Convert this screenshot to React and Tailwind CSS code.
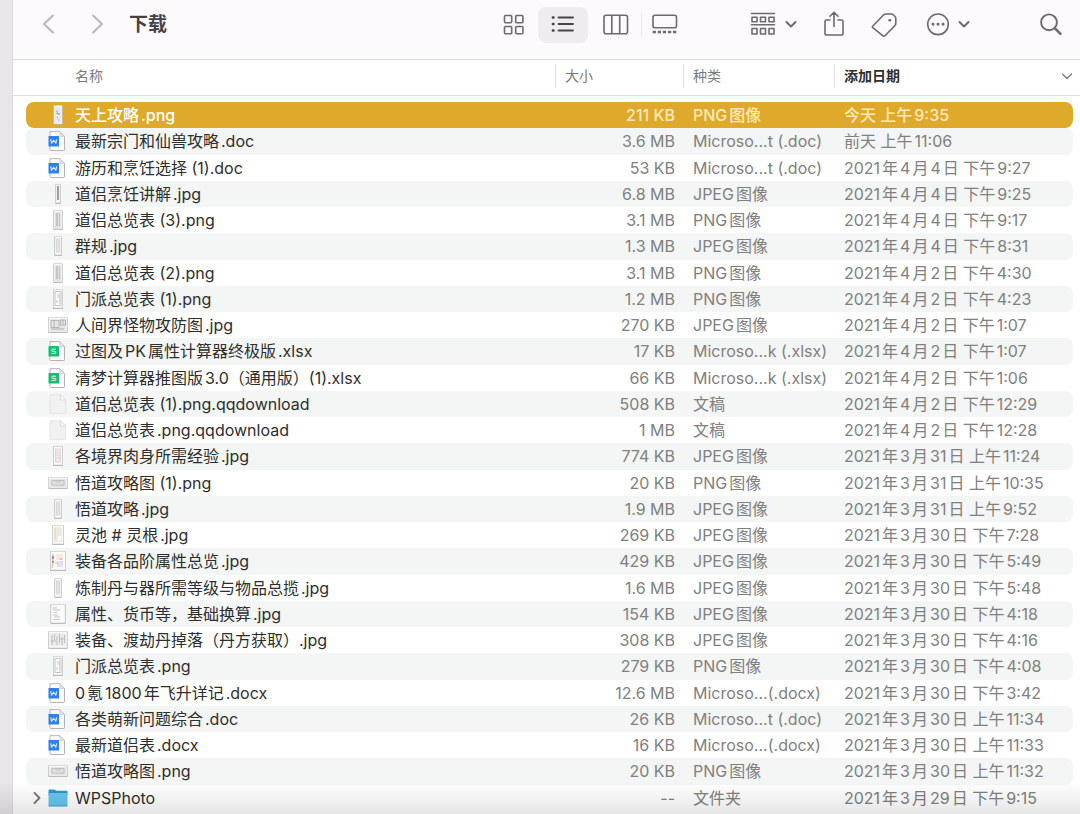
import clsx from "clsx"

const FILES = [
  { name: "天上攻略.png", size: "211 KB", kind: "PNG图像", date: "今天 上午9:35", icon: "card" },
  { name: "最新宗门和仙兽攻略.doc", size: "3.6 MB", kind: "Microso...t (.doc)", date: "前天 上午11:06", icon: "word" },
  { name: "游历和烹饪选择 (1).doc", size: "53 KB", kind: "Microso...t (.doc)", date: "2021年4月4日 下午9:27", icon: "word" },
  { name: "道侣烹饪讲解.jpg", size: "6.8 MB", kind: "JPEG图像", date: "2021年4月4日 下午9:25", icon: "sliver" },
  { name: "道侣总览表 (3).png", size: "3.1 MB", kind: "PNG图像", date: "2021年4月4日 下午9:17", icon: "tall" },
  { name: "群规.jpg", size: "1.3 MB", kind: "JPEG图像", date: "2021年4月4日 下午8:31", icon: "strip" },
  { name: "道侣总览表 (2).png", size: "3.1 MB", kind: "PNG图像", date: "2021年4月2日 下午4:30", icon: "tall" },
  { name: "门派总览表 (1).png", size: "1.2 MB", kind: "PNG图像", date: "2021年4月2日 下午4:23", icon: "frame" },
  { name: "人间界怪物攻防图.jpg", size: "270 KB", kind: "JPEG图像", date: "2021年4月2日 下午1:07", icon: "wide" },
  { name: "过图及PK属性计算器终极版.xlsx", size: "17 KB", kind: "Microso...k (.xlsx)", date: "2021年4月2日 下午1:07", icon: "sheet" },
  { name: "清梦计算器推图版3.0（通用版）(1).xlsx", size: "66 KB", kind: "Microso...k (.xlsx)", date: "2021年4月2日 下午1:06", icon: "sheet" },
  { name: "道侣总览表 (1).png.qqdownload", size: "508 KB", kind: "文稿", date: "2021年4月2日 下午12:29", icon: "blank" },
  { name: "道侣总览表.png.qqdownload", size: "1 MB", kind: "文稿", date: "2021年4月2日 下午12:28", icon: "blank" },
  { name: "各境界肉身所需经验.jpg", size: "774 KB", kind: "JPEG图像", date: "2021年3月31日 上午11:24", icon: "rosy" },
  { name: "悟道攻略图 (1).png", size: "20 KB", kind: "PNG图像", date: "2021年3月31日 上午10:35", icon: "banner" },
  { name: "悟道攻略.jpg", size: "1.9 MB", kind: "JPEG图像", date: "2021年3月31日 上午9:52", icon: "strip" },
  { name: "灵池 # 灵根.jpg", size: "269 KB", kind: "JPEG图像", date: "2021年3月30日 下午7:28", icon: "cream" },
  { name: "装备各品阶属性总览.jpg", size: "429 KB", kind: "JPEG图像", date: "2021年3月30日 下午5:49", icon: "colour" },
  { name: "炼制丹与器所需等级与物品总揽.jpg", size: "1.6 MB", kind: "JPEG图像", date: "2021年3月30日 下午5:48", icon: "strip" },
  { name: "属性、货币等，基础换算.jpg", size: "154 KB", kind: "JPEG图像", date: "2021年3月30日 下午4:18", icon: "text" },
  { name: "装备、渡劫丹掉落（丹方获取）.jpg", size: "308 KB", kind: "JPEG图像", date: "2021年3月30日 下午4:16", icon: "chart" },
  { name: "门派总览表.png", size: "279 KB", kind: "PNG图像", date: "2021年3月30日 下午4:08", icon: "frame" },
  { name: "0氪1800年飞升详记.docx", size: "12.6 MB", kind: "Microso...(.docx)", date: "2021年3月30日 下午3:42", icon: "word" },
  { name: "各类萌新问题综合.doc", size: "26 KB", kind: "Microso...t (.doc)", date: "2021年3月30日 上午11:34", icon: "word" },
  { name: "最新道侣表.docx", size: "16 KB", kind: "Microso...(.docx)", date: "2021年3月30日 上午11:33", icon: "word" },
  { name: "悟道攻略图.png", size: "20 KB", kind: "PNG图像", date: "2021年3月30日 上午11:32", icon: "banner" },
  { name: "WPSPhoto", size: "--", kind: "文件夹", date: "2021年3月29日 下午9:15", icon: "folder", folder: true },
]

// Frame size and the marks inside each image preview, on a 20x20 canvas
const PREVIEWS = {
  card: { w: 9, h: 19, marks: <><rect x="7" y="2" width="6" height="16" fill="#e6e9ef" /><path d="M9 5.500v2M11 8v2M8.500 8.500h2M9.500 12v1M10.500 14.500v1" stroke="#8f97a6" /></> },
  sliver: { w: 5, h: 19, marks: <path d="M10 2v14" stroke="#777" strokeWidth="1.4" /> },
  tall: { w: 9, h: 19, marks: <><rect x="7" y="2" width="6" height="16" fill="#dfe2e1" /><path d="M9 3v13" stroke="#a5acaa" /><path d="M11.500 4v12" stroke="#c2c8c6" /></> },
  strip: { w: 7, h: 19, marks: <><rect x="8.500" y="2" width="3" height="15" fill="#e2e3e2" /><path d="M8.500 3v13M11.500 3v13" stroke="#cfcfcf" strokeWidth="0.7" /></> },
  frame: { w: 10, h: 19, marks: <><path d="M7 2.500h6v14H7zM10 5v4M9 11v3" fill="none" stroke="#c2c5c4" /><path d="M11.500 4v11" stroke="#d5d8d7" /></> },
  rosy: { w: 10, h: 19, marks: <><rect x="7.500" y="3" width="5" height="13" fill="#f1e9ec" stroke="#d1cdcf" strokeWidth="0.7" /><path d="M8 6h4M8 9h4M8 12h4" stroke="#dcd0d4" strokeWidth="0.6" /></> },
  cream: { w: 12, h: 19, marks: <><rect x="6" y="2" width="8" height="15" fill="#edeade" /><path d="M7 3v12" stroke="#d9d5c7" /><rect x="10" y="11" width="3" height="5" fill="#fbfaf4" /></> },
  colour: { w: 16, h: 19, marks: <><path d="M4.500 3v14" stroke="#d9c9bd" strokeWidth="1.5" /><path d="M5 5v3M5 10v2" stroke="#ab7c62" strokeWidth="1.6" /><rect x="8" y="3" width="7" height="6" fill="#f4eadf" /><rect x="9" y="10" width="6" height="6" fill="#e7dcf0" /><path d="M7 12h3M11 8h4" stroke="#c9b5c9" /></> },
  text: { w: 15, h: 19, marks: <path d="M5 4h4M5 6h7M6 8.500h3M5 11h5M6 13h6M5 15.500h7" stroke="#b8bab9" strokeWidth="0.8" /> },
  wide: { w: 19, h: 15, marks: <><rect x="2" y="4" width="16" height="12" fill="#e6e6e6" /><path d="M3 5.500h8v7H3zM6 5v7M12.500 5h5v5h-5zM15 5v5M3 14h13" fill="none" stroke="#a8a8a8" strokeWidth="0.8" /></> },
  banner: { w: 19, h: 11, marks: <><rect x="2" y="6" width="16" height="8" fill="#e4e4e4" /><path d="M4 7.500h12v4.500H4zM7 9h6" fill="none" stroke="#b5b5b5" strokeWidth="0.8" /></> },
  chart: { w: 19, h: 17, marks: <><rect x="2" y="3" width="16" height="13" fill="#ececec" /><path d="M4 5v10M6.500 4v6M9 6v9M11.500 4v9M14 7v8M16.500 5v8M3 11h5M11 9h6" stroke="#b4b4b4" strokeWidth="0.8" /></> },
}

function Preview({ type }) {
  const { w, h, marks } = PREVIEWS[type]
  return (
    <svg viewBox="0 0 20 20" className="h-5 w-5 shrink-0" aria-hidden="true">
      <rect x={10 - w / 2} y={10.3 - h / 2} width={w} height={h} fill="#a6a6a6" />
      <rect x={10 - w / 2 + 0.4} y={10 - h / 2} width={w - 0.8} height={h - 0.5} fill="#fafafa" stroke="#c9cac9" strokeWidth="0.6" />
      {marks}
    </svg>
  )
}

function OfficeDoc({ sheet }) {
  return (
    <svg viewBox="0 0 20 20" className="h-5 w-5 shrink-0" aria-hidden="true">
      <path d="M2 .7h9.800l4.700 4.700v13.200a.9.9 0 0 1-.9.900H2.900a.9.9 0 0 1-.9-.900z" fill="#fff" stroke="#a9aaac" strokeWidth="0.9" />
      <path d="M11.800 .9v3.600a.9.9 0 0 0 .9.900h3.600z" fill="#e6e6e8" stroke="#bcbdbf" strokeWidth="0.6" />
      <rect x="0.500" y="5" width="10.500" height="10.500" rx="0.6" fill={sheet ? "#17bd74" : "#2f80ee"} />
      {sheet ? (
        <path d="M8 8.200H4.400a.6.6 0 0 0-.6.600v.9a.6.6 0 0 0 .6.600h2.800a.6.6 0 0 1 .6.600v.9a.6.6 0 0 1-.6.600H3.500" fill="none" stroke="#d9fbe9" strokeWidth="1" />
      ) : (
        <path d="M2.700 8.300l.9 3.800 2.100-2.600 2.100 2.600.9-3.800" fill="none" stroke="#e3f0ff" strokeWidth="1.1" />
      )}
    </svg>
  )
}

function BlankDoc() {
  return (
    <svg viewBox="0 0 20 20" className="h-5 w-5 shrink-0" aria-hidden="true">
      <path d="M2 .8h10.500L17.700 6v13.500H2z" fill="#f1f1f1" stroke="#dedede" strokeWidth="0.7" />
      <path d="M12.500 .8V6h5.200z" fill="#fdfdfd" stroke="#d2d2d2" strokeWidth="0.7" />
    </svg>
  )
}

function Folder() {
  return (
    <svg viewBox="0 0 20 20" className="h-5 w-5 shrink-0" aria-hidden="true">
      <path d="M.5 2.800c0-.8.4-1.300 1.200-1.300h4.700c.9 0 1.200 1.300 2.200 1.300h9.700c.8 0 1.200.5 1.200 1.200V7H.5z" fill="#2c97c5" />
      <path d="M.5 5h19v12.300c0 .8-.5 1.200-1.200 1.200H1.700c-.7 0-1.200-.4-1.200-1.200z" fill="#66c5ec" />
      <path d="M.7 17.800h18.600" stroke="#3fa5d0" strokeWidth="0.9" />
    </svg>
  )
}

function FileIcon({ type }) {
  if (type === "word") return <OfficeDoc />
  if (type === "sheet") return <OfficeDoc sheet />
  if (type === "blank") return <BlankDoc />
  if (type === "folder") return <Folder />
  return <Preview type={type} />
}

function Glyph({ viewBox = "0 0 28 28", className = "h-7 w-7", width = 1.6, children }) {
  return (
    <svg viewBox={viewBox} className={clsx("shrink-0", className)} fill="none" stroke="currentColor" strokeWidth={width} strokeLinecap="round" strokeLinejoin="round" aria-hidden="true">
      {children}
    </svg>
  )
}

function SmallChevron() {
  return (
    <Glyph viewBox="0 0 12 12" className="h-3 w-3" width={2}>
      <path d="M1.500 4 6 8.500 10.500 4" />
    </Glyph>
  )
}

function Toolbar() {
  return (
    <header className="flex h-[60px] items-start border-b border-[#dedcde] bg-[#fcfafc] pr-[15px] pl-[22px] text-[#6c6a6c]">
      <nav className="flex h-12 items-center gap-5 text-[#b9b7b9]">
        <button type="button" aria-label="后退">
          <Glyph width={2}><path d="M18 5.500 9 14l9 8.500" /></Glyph>
        </button>
        <button type="button" aria-label="前进">
          <Glyph width={2}><path d="m10 5.500 9 8.500-9 8.500" /></Glyph>
        </button>
      </nav>
      <h1 className="ml-[18px] flex h-[50px] flex-1 items-center text-[19px] font-bold text-[#454345]">下载</h1>

      <div className="flex h-[50px] items-center">
        <button type="button" aria-label="图标" className="flex h-9 w-12 items-center justify-center">
          <Glyph>
            <rect x="4.500" y="4.500" width="7.200" height="7.200" rx="1" />
            <rect x="15.700" y="4.500" width="7.200" height="7.200" rx="1" />
            <rect x="4.500" y="15.500" width="7.200" height="7.200" rx="1" />
            <rect x="15.700" y="15.500" width="7.200" height="7.200" rx="1" />
          </Glyph>
        </button>
        <button type="button" aria-label="列表" aria-pressed="true" className="flex h-9 w-[50px] items-center justify-center rounded-lg bg-[#eeecee] text-[#464446]">
          <Glyph width={1.8}>
            <path d="M9.500 6.500H24M9.500 13H24M9.500 19.500H24" />
            <path d="M4 6.500h.4M4 13h.4M4 19.500h.4" strokeWidth="2.7" />
          </Glyph>
        </button>
        <button type="button" aria-label="分栏" className="ml-[3px] flex h-9 w-[50px] items-center justify-center">
          <Glyph>
            <rect x="2" y="4.300" width="23.500" height="18.500" rx="2" />
            <path d="M9.800 4.500v18M17.700 4.500v18" />
          </Glyph>
        </button>
        <span className="h-6 w-px bg-[#ebe9eb]" />
        <button type="button" aria-label="画廊" className="flex h-9 w-[46px] items-center justify-center">
          <Glyph>
            <rect x="2" y="4.300" width="23.500" height="12.500" rx="2" />
            <path d="M3 21h.6M8.100 21h.6M13.200 21h.6M18.300 21h.6M23.400 21h.6" strokeWidth="2.6" strokeLinecap="square" />
          </Glyph>
        </button>
      </div>

      <div className="ml-[61px] flex h-12 items-center">
        <button type="button" aria-label="分组" className="flex items-center gap-2">
          <Glyph>
            <path d="M2.500 3.500h23M2.500 14.800h23" />
            <path d="M3 7.200h5v4.500H3zM11.500 7.200h5v4.500h-5zM20 7.200h5v4.500h-5zM3 18.500h5V24H3zM11.500 18.500h5V24h-5zM20 18.500h5V24h-5z" />
          </Glyph>
          <SmallChevron />
        </button>
        <button type="button" aria-label="共享" className="ml-[23px]">
          <Glyph>
            <path d="M10 10H6.500A1.500 1.500 0 0 0 5 11.500v12A1.500 1.500 0 0 0 6.500 25h15a1.500 1.500 0 0 0 1.500-1.500v-12a1.500 1.500 0 0 0-1.500-1.500H18M14 16.500V2.500M10 6.300l4-4 4 4" />
          </Glyph>
        </button>
        <button type="button" aria-label="标签" className="ml-[22px]">
          <Glyph>
            <path d="M2.800 16 13.500 5q1-1 2.500-1h5.500q1 0 1.700.7l1.800 1.800q.8.800.8 2v5q0 1.200-1 2.200L15 25.800q-1 1-2 0L2.800 17.600q-.9-.8 0-1.600z" />
            <path d="M19.700 10.300h.2" strokeWidth="2.6" />
          </Glyph>
        </button>
        <button type="button" aria-label="更多" className="ml-[26px] flex items-center gap-1.5">
          <Glyph>
            <circle cx="14" cy="14.300" r="10.300" />
            <path d="M9 14.300h.1M14 14.300h.1M19 14.300h.1" strokeWidth="2.9" />
          </Glyph>
          <SmallChevron />
        </button>
        <button type="button" aria-label="搜索" className="ml-[67px]">
          <Glyph width={1.9}>
            <circle cx="12" cy="12.300" r="7.900" />
            <path d="m18 18.300 5.500 5.500" strokeWidth="2.5" />
          </Glyph>
        </button>
      </div>
    </header>
  )
}

function HeaderCell({ children, active, first }) {
  return (
    <th
      scope="col"
      aria-sort={active ? "descending" : undefined}
      className="border-b border-[#e0dee0] pt-1 pb-1.5 align-top font-normal"
    >
      <button
        type="button"
        className={clsx(
          "flex h-6 w-full items-center text-left",
          first ? "pl-[49px]" : "border-l border-[#e0dee0] pl-[9px]",
          active ? "font-bold text-[#303030]" : "text-[#7b7b7b]",
        )}
      >
        {children}
      </button>
    </th>
  )
}

function FileRow({ file, selected, striped }) {
  const bg = selected ? "bg-[#dfaa2b]" : striped ? "bg-[#f4f5f5]" : ""
  const meta = selected ? "font-medium text-[#fbe9b8]" : "text-[#808080]"

  return (
    <tr aria-selected={selected} className="leading-[26px]">
      <td className="p-0" />
      <td className={clsx("rounded-l-lg p-0", bg, selected ? "font-medium text-white" : "text-[#2e2e2e]")}>
        <div className="flex items-center">
          <span className="flex w-[22px] shrink-0 justify-center">
            {file.folder && (
              <button type="button" aria-label="展开" className="text-[#777]">
                <Glyph viewBox="0 0 12 12" className="h-3 w-3" width={1.8}><path d="m3.500 1 5 5-5 5" /></Glyph>
              </button>
            )}
          </span>
          <FileIcon type={file.icon} />
          <span className="ml-[7px] truncate">{file.name}</span>
        </div>
      </td>
      <td className={clsx("p-0 pr-2 text-right whitespace-nowrap", bg, meta)}>{file.size}</td>
      <td className={clsx("truncate p-0 pl-2.5", bg, meta)}>{file.kind}</td>
      <td className={clsx("truncate rounded-r-lg p-0 pl-2.5", bg, meta)}>{file.date}</td>
      <td className="p-0" />
    </tr>
  )
}

export default function App() {
  return (
    <div className="relative flex min-h-screen bg-white font-['Inter','Noto_Sans_CJK_SC',sans-serif] [text-autospace:normal]" lang="zh-CN">
      <aside className="w-[13px] shrink-0 border-r border-[#dcdadc] bg-[#e8e6e8]" />
      <main className="flex min-w-0 flex-1 flex-col pb-[3px]">
        <Toolbar />
        <table className="w-full flex-1 table-fixed border-separate border-spacing-0 text-base">
          <colgroup>
            <col className="w-[13px]" />
            <col />
            <col className="w-32" />
            <col className="w-[151px]" />
            <col className="w-[239px]" />
            <col className="w-[7px]" />
          </colgroup>
          <thead>
            <tr className="h-9 text-sm">
              <td className="border-b border-[#e0dee0] p-0" />
              <HeaderCell first>名称</HeaderCell>
              <HeaderCell>大小</HeaderCell>
              <HeaderCell>种类</HeaderCell>
              <HeaderCell active>
                <span className="flex-1">添加日期</span>
                <Glyph viewBox="0 0 12 12" className="h-3 w-3 text-[#777]" width={1.2}><path d="m1.500 4 4.500 4.500L10.500 4" /></Glyph>
              </HeaderCell>
              <td className="border-b border-[#e0dee0] p-0" />
            </tr>
            <tr className="h-1.5">
              <td colSpan={6} className="p-0" />
            </tr>
          </thead>
          <tbody>
            {FILES.map((file, i) => (
              <FileRow key={file.name} file={file} selected={i === 0} striped={i % 2 === 1} />
            ))}
          </tbody>
        </table>
      </main>
      {/* soft shade along the bottom edge of the window */}
      <div className="pointer-events-none absolute inset-x-0 bottom-0 h-8 bg-linear-to-t from-black/10 to-transparent" />
    </div>
  )
}
